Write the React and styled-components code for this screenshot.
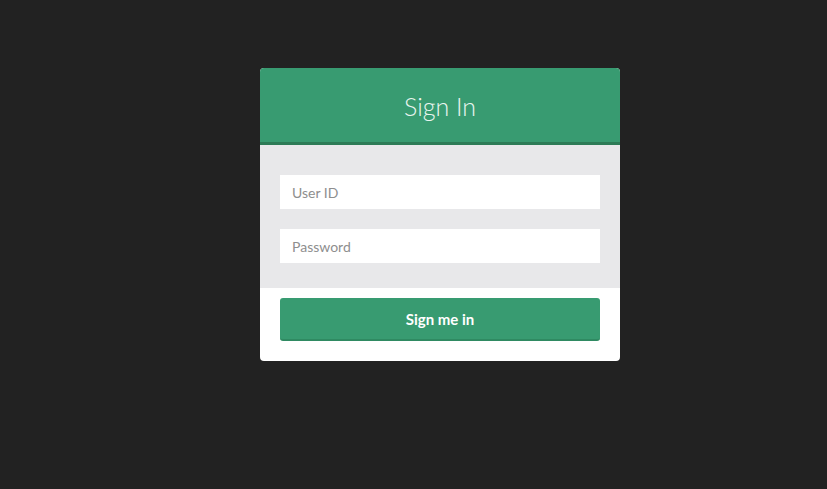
import React from 'react';
import styled, { createGlobalStyle } from 'styled-components';

const GlobalStyle = createGlobalStyle`
  html, body {
    margin: 0;
    padding: 0;
    background: #222222;
    font-family: Lato, "Open Sans", sans-serif;
  }
`;

const Page = styled.div`
  min-height: 489px;
  padding: 68px 0 0 260px;
  box-sizing: border-box;
`;

const Card = styled.div`
  width: 360px;
  background: #fff;
  border-radius: 4px;
  overflow: hidden;
`;

const Header = styled.div`
  height: 77px;
  padding-top: 2px;
  box-sizing: border-box;
  background: #389b71;
  border-bottom: 3px solid #2d7b57;
  display: flex;
  align-items: center;
  justify-content: center;
  color: #e9f5ef;
  font-size: 25px;
  font-weight: 300;
`;

const Fields = styled.div`
  background: #e8e8ea;
  padding: 30px 20px 25px;
  display: flex;
  flex-direction: column;
  gap: 20px;
`;

const Input = styled.input`
  height: 34px;
  border: none;
  outline: none;
  padding: 0 12px;
  font-family: inherit;
  font-size: 14px;
  color: #555;
  background: #fff;
  &::placeholder {
    color: #8e8e8e;
  }
`;

const Footer = styled.div`
  padding: 10px 20px 20px;
`;

const Button = styled.button`
  width: 100%;
  height: 43px;
  border: none;
  border-bottom: 2px solid #2f8a62;
  border-radius: 3px;
  background: #389b71;
  color: #fff;
  font-family: inherit;
  font-size: 15px;
  font-weight: 700;
`;

export default function App() {
  return (
    <Page>
      <GlobalStyle />
      <Card>
        <Header>Sign In</Header>
        <Fields>
          <Input placeholder="User ID" />
          <Input type="password" placeholder="Password" />
        </Fields>
        <Footer>
          <Button>Sign me in</Button>
        </Footer>
      </Card>
    </Page>
  );
}
